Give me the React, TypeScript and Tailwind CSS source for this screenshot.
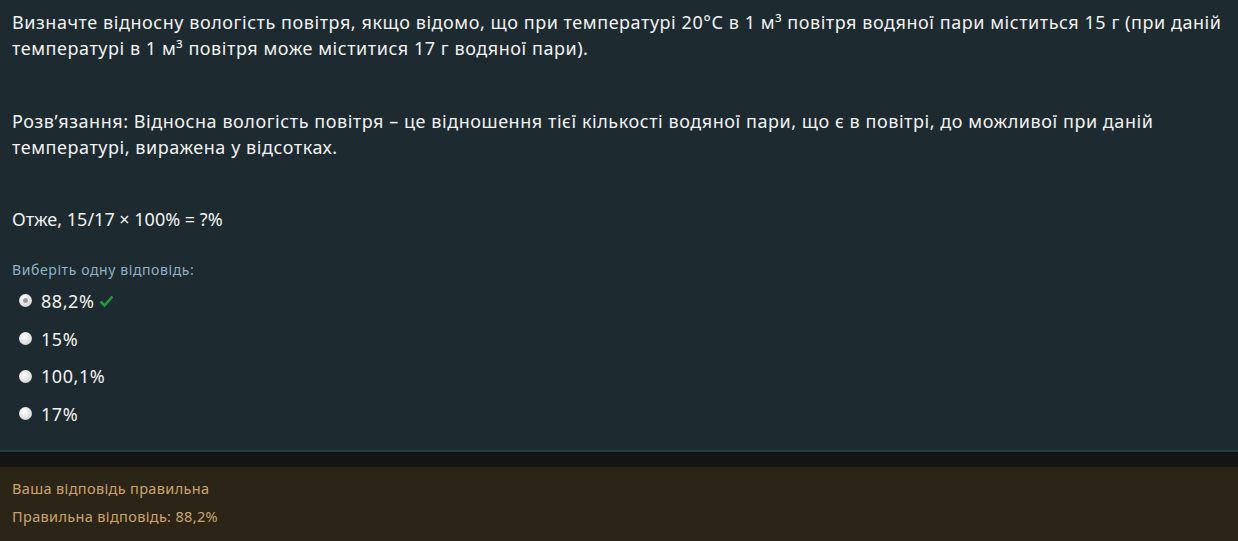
import React from "react";

const font = { fontFamily: '"Noto Sans", "Open Sans", sans-serif' };

function Radio({ checked }: { checked?: boolean }) {
  return (
    <span className="relative inline-flex h-[13px] w-[13px] items-center justify-center rounded-full bg-[radial-gradient(circle_at_40%_35%,#ffffff,#d8d8d8_70%,#bdbdbd)]">
      {checked && <span className="h-[5px] w-[5px] rounded-full bg-[#9a9a9a]" />}
    </span>
  );
}

export default function App() {
  const options = [
    { t: "88,2%", checked: true, ok: true },
    { t: "15%" },
    { t: "100,1%" },
    { t: "17%" },
  ];
  return (
    <div className="w-[1238px] h-[541px] bg-[#2d2418] flex flex-col" style={font}>
      <div className="bg-[#1d2a30] border-b-2 border-[#2a3840] px-[12px] pt-[9px] pb-[17px] text-[18px] leading-[26px] text-[#f2f2f2] tracking-[0.55px]">
        <p>
          Визначте відносну вологість повітря, якщо відомо, що при температурі 20°С в 1 м³ повітря водяної пари міститься 15 г (при даній температурі в 1 м³ повітря може міститися 17 г водяної пари).
        </p>
        <p className="mt-[47px]">
          Розв’язання: Відносна вологість повітря – це відношення тієї кількості водяної пари, що є в повітрі, до можливої при даній температурі, виражена у відсотках.
        </p>
        <p className="mt-[46px] tracking-[0px]">Отже, 15/17 × 100% = ?%</p>
        <div className="mt-[28px] text-[14px] leading-[20px] text-[#8fb3c6] tracking-[0.6px]">Виберіть одну відповідь:</div>
        <div className="mt-[2px] flex flex-col">
          {options.map((o) => (
            <div key={o.t} className="flex h-[37.7px] items-center pl-[7px]">
              <Radio checked={o.checked} />
              <span className="ml-[9px]">{o.t}</span>
              {o.ok && (
                <svg className="ml-[5px]" width="15" height="12" viewBox="0 0 15 12">
                  <path d="M1.5 6.5 L5.5 10.5 L13.5 1.5" fill="none" stroke="#1f9a3c" strokeWidth="2.6" />
                </svg>
              )}
            </div>
          ))}
        </div>
      </div>
      <div className="h-[15px] bg-[#141414]" />
      <div className="px-[12px] pt-[7px] text-[14.5px] leading-[28px] text-[#c9a46f] tracking-[0.35px]">
        <div>Ваша відповідь правильна</div>
        <div>Правильна відповідь: 88,2%</div>
      </div>
    </div>
  );
}
